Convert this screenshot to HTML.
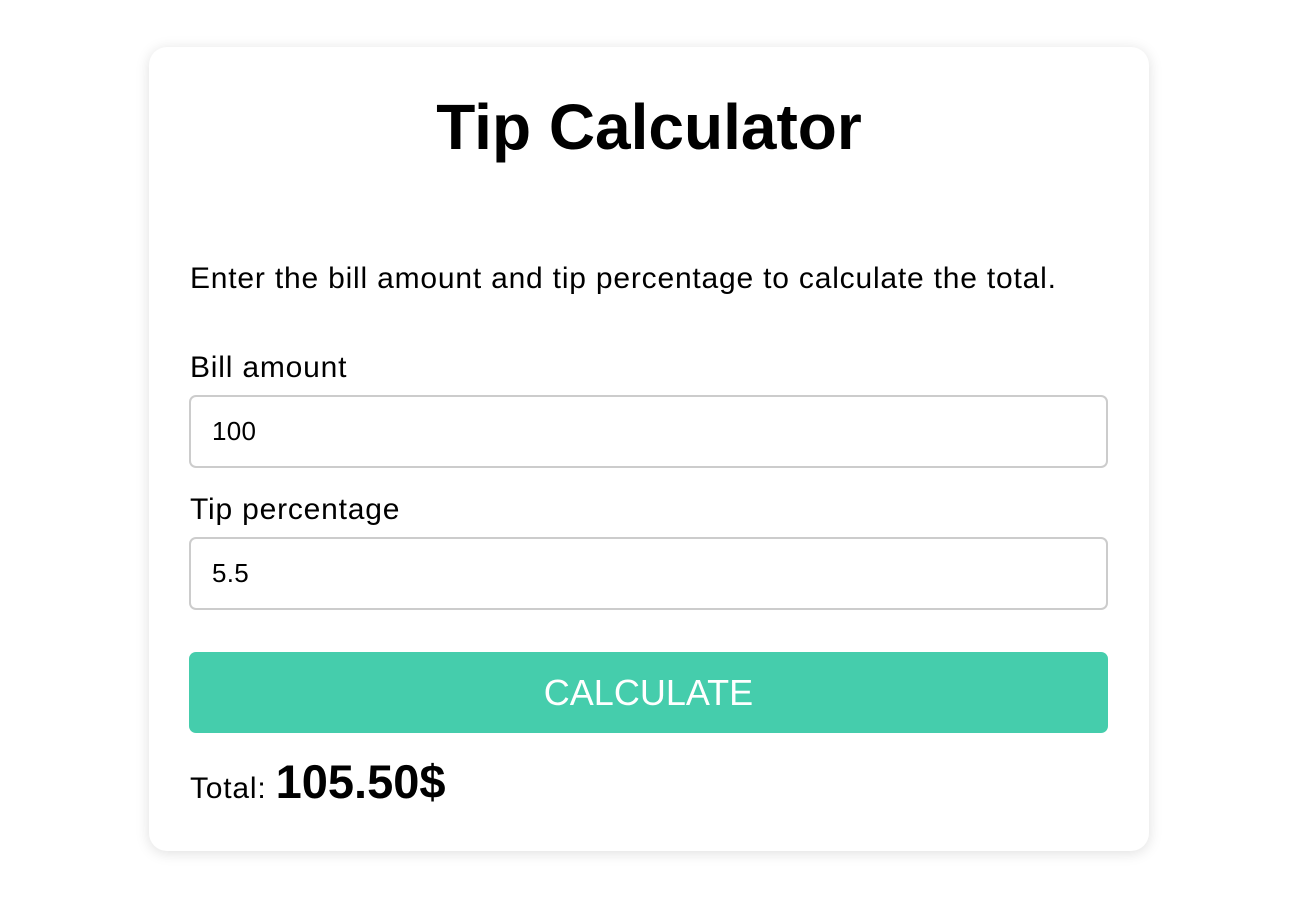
<!DOCTYPE html>
<html><head><meta charset="utf-8"><style>
html,body{margin:0;padding:0;background:#fff;width:1292px;height:900px;overflow:hidden;font-family:"Liberation Sans",Arial,sans-serif;color:#000}
.card{position:absolute;left:149px;top:47px;width:1000px;height:804px;background:#fff;border-radius:18px;box-shadow:0 2px 14px rgba(0,0,0,0.13);box-sizing:border-box}
.abs{position:absolute;white-space:nowrap}
h1{position:absolute;left:0;width:1000px;text-align:center;top:42px;margin:0;font-size:64px;font-weight:bold;line-height:76px}
.t{font-size:30px;line-height:32px;letter-spacing:0.8px}
.inp{position:absolute;left:40px;width:919px;height:73px;border:2px solid #ccc;border-radius:7px;box-sizing:border-box;font-size:26px;line-height:69px;padding-left:21px;letter-spacing:0.3px}
.btn{position:absolute;left:40px;top:605px;width:919px;height:81px;background:#45cdac;border-radius:7px;color:#fff;font-size:36px;text-align:center;line-height:81px}
</style></head><body>
<div class="card">
<h1>Tip Calculator</h1>
<div class="abs t" style="left:41px;top:216px">Enter the bill amount and tip percentage to calculate the total.</div>
<div class="abs t" style="left:41px;top:305px">Bill amount</div>
<div class="inp" style="top:348px">100</div>
<div class="abs t" style="left:41px;top:447px">Tip percentage</div>
<div class="inp" style="top:490px">5.5</div>
<div class="btn">CALCULATE</div>
<div class="abs" style="left:41px;top:710px;font-size:30px;line-height:50px;letter-spacing:0.8px">Total: <b style="font-size:47px;letter-spacing:0">105.50$</b></div>
</div>
</body></html>
